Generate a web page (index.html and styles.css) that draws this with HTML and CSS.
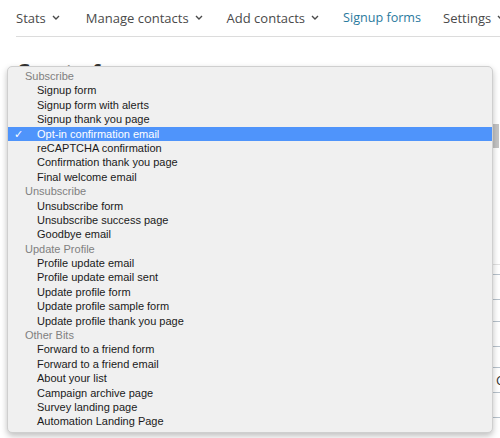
FILE: index.html
```html
<!DOCTYPE html>
<html lang="en">
<head>
    <meta charset="UTF-8">
    <meta name="viewport" content="width=device-width, initial-scale=1.0">
    <title>Signup forms</title>
    <link rel="stylesheet" href="styles.css">
</head>
<body>
    <nav class="top-nav">
        <a class="nav-item">Stats <svg class="chev" viewBox="0 0 8 5"><path d="M1 1l3 3 3-3"/></svg></a>
        <a class="nav-item">Manage contacts <svg class="chev" viewBox="0 0 8 5"><path d="M1 1l3 3 3-3"/></svg></a>
        <a class="nav-item">Add contacts <svg class="chev" viewBox="0 0 8 5"><path d="M1 1l3 3 3-3"/></svg></a>
        <a class="nav-item active">Signup forms</a>
        <a class="nav-item">Settings <svg class="chev" viewBox="0 0 8 5"><path d="M1 1l3 3 3-3"/></svg></a>
    </nav>

    <div class="content">
        <h1>Create forms</h1>
        <div class="picker-row">
            <div class="picker-thumb"></div>
        </div>
        <div class="side-table">
            <div class="side-row faint"></div>
            <div class="side-row short"></div>
            <div class="side-row"></div>
            <div class="side-row mid"></div>
            <div class="side-row"></div>
            <div class="side-row narrow"></div>
            <div class="side-row">C</div>
            <div class="side-row"></div>
        </div>

        <div class="select-menu">
            <div class="group">Subscribe</div>
            <div class="option">Signup form</div>
            <div class="option">Signup form with alerts</div>
            <div class="option">Signup thank you page</div>
            <div class="option selected"><span class="check">✓</span>Opt-in confirmation email</div>
            <div class="option">reCAPTCHA confirmation</div>
            <div class="option">Confirmation thank you page</div>
            <div class="option">Final welcome email</div>
            <div class="group">Unsubscribe</div>
            <div class="option">Unsubscribe form</div>
            <div class="option">Unsubscribe success page</div>
            <div class="option">Goodbye email</div>
            <div class="group">Update Profile</div>
            <div class="option">Profile update email</div>
            <div class="option">Profile update email sent</div>
            <div class="option">Update profile form</div>
            <div class="option">Update profile sample form</div>
            <div class="option">Update profile thank you page</div>
            <div class="group">Other Bits</div>
            <div class="option">Forward to a friend form</div>
            <div class="option">Forward to a friend email</div>
            <div class="option">About your list</div>
            <div class="option">Campaign archive page</div>
            <div class="option">Survey landing page</div>
            <div class="option">Automation Landing Page</div>
        </div>
    </div>
</body>
</html>
```

FILE: styles.css
```css
body {
    margin: 0;
    background-color: #ffffff;
    font-family: "Open Sans", Arial, sans-serif;
    color: #444;
    height: 438px;
    overflow: hidden;
}
.top-nav {
    display: flex;
    align-items: center;
    margin-left: 16px;
    height: 36px;
    border-bottom: 1px solid #dcdcdc;
    white-space: nowrap;
}
.nav-item {
    display: flex;
    align-items: center;
    font-size: 13px;
    color: #4a4a4a;
    margin-right: 24px;
    padding-bottom: 1px;
}
.nav-item:first-child {
    margin-right: 26px;
}
.nav-item.active {
    color: #2b7a9e;
    font-size: 12.6px;
    margin-right: 22px;
}
.chev {
    width: 8px;
    height: 5px;
    margin-left: 6px;
    fill: none;
    stroke: #4a4a4a;
    stroke-width: 1.4;
}
.content {
    position: relative;
    padding-left: 16px;
}
h1 {
    box-sizing: border-box;
    margin: 0;
    padding-top: 19px;
    font-size: 22px;
    font-weight: 600;
    color: #333;
    height: 60px;
}
.picker-row {
    display: flex;
    justify-content: flex-end;
    height: 150px;
}
.picker-thumb {
    width: 6px;
    height: 24px;
    margin-top: 27px;
    margin-right: 1px;
    background-color: #c4c4c4;
}
.side-table {
    margin-left: 476px;
    margin-top: 7px;
}
.side-row {
    height: 24px;
    border-bottom: 1px solid #b8c2cc;
    font-size: 13px;
    line-height: 24px;
    padding-left: 4px;
    color: #333;
}
.side-row.faint {
    height: 10px;
    border-bottom-color: #e2e2e2;
}
.side-row.short {
    height: 9px;
}
.side-row.mid {
    height: 21px;
}
.side-row.narrow {
    height: 20px;
}
.select-menu {
    position: absolute;
    top: 29px;
    left: 7px;
    width: 484px;
    padding: 2px 0 3px;
    background-color: #f0f0f0;
    border: 1px solid #cfcfcf;
    border-radius: 5px;
    box-shadow: 0 3px 6px rgba(0, 0, 0, 0.25);
    font-family: "Liberation Sans", Arial, sans-serif;
    font-size: 11px;
}
.group,
.option {
    height: 14.4px;
    line-height: 14.4px;
    white-space: nowrap;
    position: relative;
}
.group {
    padding-left: 17px;
    color: #808080;
}
.option {
    padding-left: 29px;
    color: #1a1a1a;
}
.option.selected {
    background-color: #4f94fb;
    color: #ffffff;
}
.check {
    position: absolute;
    left: 6px;
    top: 0;
}
```
